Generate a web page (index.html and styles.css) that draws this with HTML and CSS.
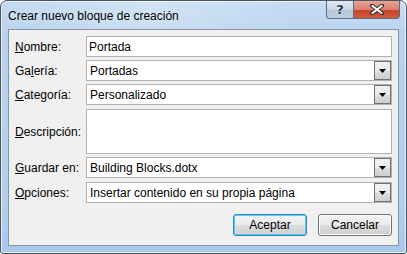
FILE: index.html
```html
<!DOCTYPE html>
<html lang="es">
<head>
<meta charset="utf-8">
<link rel="stylesheet" href="styles.css">
</head>
<body>
<div class="window">
  <div class="titlebar">
    <span class="title">Crear nuevo bloque de creación</span>
    <div class="caption-btns">
      <div class="cbtn help">?</div>
      <div class="cbtn close">
        <svg width="14" height="11" viewBox="0 0 14 11"><path d="M2 1.5 L12 9.5 M12 1.5 L2 9.5" stroke="#3a2a28" stroke-width="4" stroke-linecap="round"/><path d="M2.5 2 L11.5 9 M11.5 2 L2.5 9" stroke="#fff" stroke-width="2.2" stroke-linecap="round"/></svg>
      </div>
    </div>
  </div>
  <div class="client">
    <div class="form">
      <div class="row r1">
        <label class="lbl"><u>N</u>ombre:</label>
        <div class="box text">Portada</div>
      </div>
      <div class="row r2">
        <label class="lbl">Ga<u>l</u>ería:</label>
        <div class="box combo"><span class="val">Portadas</span><span class="drop"><svg width="7" height="4" viewBox="0 0 7 4"><path d="M0 0H7L3.5 4Z" fill="#000"/></svg></span></div>
      </div>
      <div class="row r3">
        <label class="lbl"><u>C</u>ategoría:</label>
        <div class="box combo"><span class="val">Personalizado</span><span class="drop"><svg width="7" height="4" viewBox="0 0 7 4"><path d="M0 0H7L3.5 4Z" fill="#000"/></svg></span></div>
      </div>
      <div class="row r4">
        <label class="lbl"><u>D</u>escripción:</label>
        <div class="box area"></div>
      </div>
      <div class="row r5">
        <label class="lbl"><u>G</u>uardar en:</label>
        <div class="box combo"><span class="val">Building Blocks.dotx</span><span class="drop"><svg width="7" height="4" viewBox="0 0 7 4"><path d="M0 0H7L3.5 4Z" fill="#000"/></svg></span></div>
      </div>
      <div class="row r6">
        <label class="lbl"><u>O</u>pciones:</label>
        <div class="box combo"><span class="val">Insertar contenido en su propia página</span><span class="drop"><svg width="7" height="4" viewBox="0 0 7 4"><path d="M0 0H7L3.5 4Z" fill="#000"/></svg></span></div>
      </div>
    </div>
    <div class="buttons">
      <div class="btn default">Aceptar</div>
      <div class="btn">Cancelar</div>
    </div>
  </div>
</div>
</body>
</html>
```

FILE: styles.css
```css
html, body {
  margin: 0;
  padding: 0;
  width: 407px;
  height: 254px;
  overflow: hidden;
  background: #fff;
}
body {
  font-family: "Liberation Sans", Arial, sans-serif;
  font-size: 12px;
  color: #000;
}
.window {
  box-sizing: border-box;
  width: 407px;
  height: 254px;
  border: 1px solid #4a5666;
  border-radius: 7px 7px 3px 3px;
  background: linear-gradient(180deg, #c3daf2 0px, #b9d3ee 30px, #b4cfec 200px, #a9c8ea 254px);
  display: flex;
  flex-direction: column;
  box-shadow: inset 0 0 0 1px #e6f0fb;
}
.titlebar {
  height: 28px;
  display: flex;
  align-items: flex-start;
  justify-content: space-between;
  padding-left: 7px;
  padding-right: 6px;
  background: linear-gradient(90deg, rgba(255,255,255,0) 0px, rgba(255,255,255,0.25) 150px, rgba(255,255,255,0.05) 300px);
}
.title {
  margin-top: 8px;
  font-size: 12px;
  line-height: 15px;
  color: #000;
  text-shadow: 0 0 6px #e8f2fc;
}
.caption-btns {
  display: flex;
}
.cbtn {
  height: 18px;
  box-sizing: border-box;
  border: 1px solid #5b6c80;
  border-top: none;
  display: flex;
  align-items: center;
  justify-content: center;
}
.help {
  width: 27px;
  border-radius: 0 0 0 4px;
  border-right: none;
  background: linear-gradient(180deg, #dfe8f2 0%, #c9d6e4 50%, #b4c5d8 51%, #bdd0e4 100%);
  color: #2d3c4e;
  font-family: "DejaVu Sans", sans-serif;
  font-size: 13px;
  font-weight: bold;
  line-height: 16px;
  text-shadow: 0 0 2px #fff;
}
.close {
  width: 47px;
  border-radius: 0 0 4px 0;
  background: linear-gradient(180deg, #e8a596 0%, #d9806d 50%, #c8432a 51%, #d2583a 100%);
}
.client {
  margin: 0 7px 7px 7px;
  flex: 1;
  background: #f0f0f0;
  border: 1px solid #8593a4;
  display: flex;
  flex-direction: column;
  padding: 6px 6px 0 6px;
}
.form {
  display: flex;
  flex-direction: column;
  gap: 3px;
}
.row {
  display: flex;
  align-items: center;
}
.r4 { margin-top: 1px; }
.r6 { margin-top: 1px; }
.lbl {
  width: 71px;
  flex: none;
}
.box {
  flex: 1;
  box-sizing: border-box;
  height: 21px;
  background: #fff;
  border: 1px solid #b2b2b2;
  display: flex;
  align-items: center;
}
.text {
  padding-left: 2px;
}
.combo .val {
  flex: 1;
  padding-left: 3px;
}
.area {
  height: 45px;
}
.drop {
  width: 17px;
  height: 19px;
  box-sizing: border-box;
  border: 1px solid #707070;
  background: linear-gradient(180deg, #f2f2f2 0%, #ebebeb 50%, #dddddd 51%, #cfcfcf 100%);
  display: flex;
  align-items: center;
  justify-content: center;
}
.buttons {
  display: flex;
  justify-content: flex-end;
  gap: 11px;
  margin-top: 11px;
}
.btn {
  width: 74px;
  height: 22px;
  box-sizing: border-box;
  border: 1px solid #707070;
  border-radius: 3px;
  background: linear-gradient(180deg, #f2f2f2 0%, #ebebeb 50%, #dddddd 51%, #cfcfcf 100%);
  display: flex;
  align-items: center;
  justify-content: center;
  box-shadow: inset 0 0 0 1px #fcfcfc;
}
.btn.default {
  border-color: #3c7fb1;
  box-shadow: inset 0 0 0 1px #48d4ff;
}
```
